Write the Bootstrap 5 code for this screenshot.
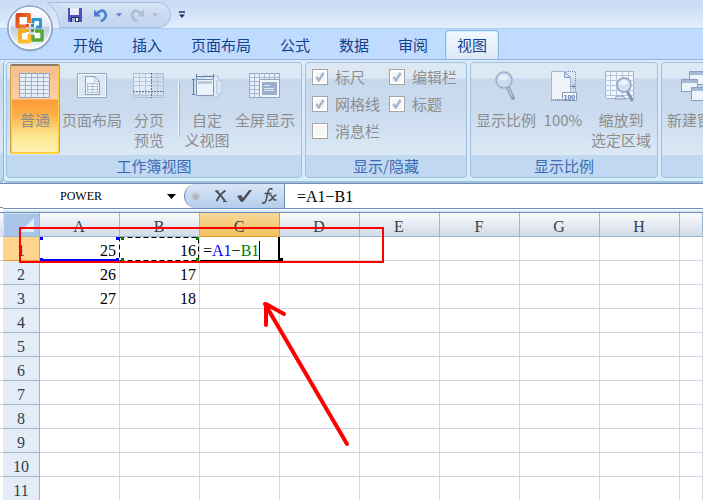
<!DOCTYPE html>
<html lang="zh-CN">
<head>
<meta charset="utf-8">
<meta name="viewport" content="width=device-width, initial-scale=1">
<title>工作表</title>
<link href="https://cdn.jsdelivr.net/npm/bootstrap@5.3.0/dist/css/bootstrap.min.css" rel="stylesheet">
<style>
body{font-family:"Noto Sans CJK SC","Liberation Sans",sans-serif;font-size:15px;line-height:20px;background:#fff;color:#000;height:100vh;overflow:hidden}
svg{display:block;flex:none}
.titlebar{height:28px;background:linear-gradient(#cadcf6,#cfe0f7 40%,#e4effd)}
.office-btn{left:6px;top:4px;z-index:3;border:0;background:none;padding:0}
.quick-bar{margin-left:47px;padding-top:2px}
.quick-items{height:26px;border:1px solid #a5bfe2;border-left:0;border-radius:0 13px 13px 0;background:linear-gradient(#d9e6f8,#c8d9f0 50%,#c3d6f0);padding:0 12px 0 7px}
.plain-btn{border:0;background:none;padding:0;display:flex;align-items:center;justify-content:center}
.tabs-row{height:32px;background:#bfdbff;border-top:1px solid #a9cff5;border-bottom:1px solid #8db2e3;padding-left:59px}
.tabs-row .nav-link{color:#15428b;padding:5px 14px 0;height:29px;line-height:20px;border:0;margin-right:1px;border-radius:0}
.tabs-row .nav-link.active{background:linear-gradient(#f2f8ff,#dde8f5);border:1px solid #8db2e3;border-bottom:0;border-radius:4px 4px 0 0;padding:4px 11px 0;margin:0 2px;box-shadow:inset 1px 1px #c4f0ff,inset -1px 0 #c4f0ff}
.edge{width:3px;flex:none}
.edge-ribbon{height:123px;background:linear-gradient(#dce8f5,#c8d8ed 20%,#dbe8f4 75%,#c0d8f1 76%,#c0d8f1 95%,#a8bfdc)}
.edge-bar{height:30px;border-top:1px solid #6b90bd;background:linear-gradient(#fff 0 23px,#6b90bd 23px 24px,#fff 24px 28px,#6b90bd 28px)}
.edge-grid{background:linear-gradient(#f9fbfc,#d3dbe8) 0 0/3px 24px no-repeat,repeating-linear-gradient(#fff 0 23px,#d0d7e5 23px 24px)}
.ribbon{height:123px;border-left:1px solid #8db2e3;border-bottom:2px solid #aabed9;border-radius:4px 0 0 4px;background:#dbeafa;padding:2px 0 2px 2px;gap:3px;box-shadow:inset 0 -2px #cdf2ff,inset 1px 0 #cdf2ff}
.ribbon-group{height:116px;border:1px solid #a3bfda;border-radius:4px;flex:none;background:linear-gradient(#dde8f5 0 15px,#c7d8ed 16px,#cbdbef 50px,#dbe9f5 92px,#c0d8f1 92px)}
.ribbon-group.last-group{flex:1 0 180px}
.group-body{height:92px;padding:1px 3px}
.group-title{height:22px;line-height:22px;color:#3e6ab3;text-align:center}
.tool-btn{height:90px;border:0;background:none;padding:6px 0 0;color:#8d8d8d;display:flex;flex-direction:column;align-items:center;gap:8px;line-height:20px;white-space:nowrap}
.tool-btn.narrow{width:50px}.tool-btn.mid{width:64px}.tool-btn.wide{width:66px}
.tool-btn.selected{border:1px solid #8e7c5c;border-top-width:2px;border-right-color:#c9a04b;border-left-color:#c9a04b;border-bottom-color:#ffd23c;padding-top:4px;border-radius:2px;box-shadow:inset 1px -1px #ffd045,inset -1px 0 #ffd045;background:linear-gradient(#f5bd8c,#fcd0a3 38%,#fb9a39 39%,#fcae47 55%,#fde58f 80%,#fdf3b4)}
.rule{width:2px;height:55px;margin:18px 2px 0 4px;background:#f6faff;border-right:1px solid #9ab5da}
.checks{padding:0 5px 0 6px;display:grid;grid-template-columns:77px 72px;grid-auto-rows:27px;align-content:start}
.checks label{color:#8d8d8d;display:flex;align-items:center;gap:7px;white-space:nowrap}
.checks .form-check-input{width:16px;height:16px;margin:0;border:1px solid #a6a6a6;border-radius:0;background-color:#f6f6f6;box-shadow:inset 0 0 0 2px #fff;opacity:1;flex:none}
.checks .form-check-input:checked{background-color:#f3f5f8;background-size:14px 14px;background-image:url("data:image/svg+xml,%3Csvg xmlns='http://www.w3.org/2000/svg' viewBox='0 0 14 14'%3E%3Cpath d='M3.5 7l2.3 3.6L10.5 3' fill='none' stroke='%23a5b5cc' stroke-width='2.4'/%3E%3C/svg%3E")}
.checks .form-check-input:disabled~span{opacity:1}
.formula-bar{height:26px;border-top:1px solid #6b90bd;border-bottom:1px solid #6b90bd;font-family:"Liberation Serif",serif}
.name-box{width:181px}
.name-box input{width:156px;border:0;padding:0;text-align:center;font-size:12px;background:none;outline:0}
.fx-tools{width:101px;background:linear-gradient(#d9e6f7,#b4cdec);border:1px solid #6b90bd;border-width:0 1px;border-radius:13px 0 0 13px;padding-left:5px}
.dot{width:10px;height:10px;border-radius:50%;background:radial-gradient(circle at 60% 60%,#a3a9b4,#e9eef6);margin-right:14px}
.formula-input{border:0;outline:0;padding:2px 12px 0;font-size:16px;color:#000}
.gutter{height:4px;border-bottom:1px solid #6b90bd;background:linear-gradient(#fff 0 1px,#dbe8f8 1px)}
.sheet{table-layout:fixed;width:100%;border-collapse:separate;border-spacing:0;font-family:"Liberation Serif",serif;font-size:16px;line-height:19px}
.sheet col.head-col{width:37px}.sheet col.data-col{width:80px}
.sheet td,.sheet th{height:24px;padding:4px 3px 0 2px;border-right:1px solid #d0d7e5;border-bottom:1px solid #d0d7e5;font-weight:400;white-space:nowrap;overflow:hidden}
.sheet td{text-align:right}
.sheet thead th{text-align:center;color:#333f4a;background:linear-gradient(#f9fbfc,#d3dbe8);border-color:#9eb6ce}
.sheet thead th.hot{background:linear-gradient(#f8d798,#f1c15f);border-color:#f29536}
.sheet tbody th{text-align:center;color:#333f4a;background:#e4ecf7;border-color:#9eb6ce;padding:4px 0 0}
.sheet tbody th.hot{background:#ffd58d;border-color:#f29536}
.sheet thead th.corner{background:#a9c4e9;padding:0;box-shadow:inset 1px 1px #d4e3f5}
.sheet td.edit-cell{text-align:left;border-right:2px solid #000;padding-left:3px;border-bottom-color:#000}
.ref-a{color:#00f}.ref-b{color:#008000}
.caret{display:inline-block;width:1px;height:19px;background:#000;vertical-align:top}
.marks{left:0;top:0;z-index:4;pointer-events:none}
</style>
<script src="https://cdn.jsdelivr.net/npm/bootstrap@5.3.0/dist/js/bootstrap.bundle.min.js"></script>
</head>
<body class="d-flex flex-column">
<header class="position-relative">
  <div class="titlebar d-flex">
    <button class="office-btn position-absolute" aria-label="Office">
      <svg width="48" height="50" viewBox="0 0 48 50">
        <defs>
          <linearGradient id="orb" x2="0" y2="1"><stop offset="0" stop-color="#fff"/><stop offset=".45" stop-color="#e3e9f3"/><stop offset=".5" stop-color="#c0cde1"/><stop offset=".8" stop-color="#e2eaf5"/><stop offset="1" stop-color="#fff"/></linearGradient>
          <linearGradient id="or" x2="1" y2="1"><stop stop-color="#d9451b"/><stop offset="1" stop-color="#f2892e"/></linearGradient>
          <linearGradient id="ye" x2="1" y2="1"><stop stop-color="#f6a81b"/><stop offset="1" stop-color="#fbc832"/></linearGradient>
        </defs>
        <circle cx="24" cy="24.500" r="23" fill="#7188ad" opacity=".5"/>
        <circle cx="24" cy="24" r="22" fill="url(#orb)" stroke="#8fa3c2" stroke-width="1.500"/>
        <circle cx="24" cy="24" r="20.500" fill="none" stroke="#fff" stroke-width="1.500" opacity=".8"/>
        <path d="M13 12h9v9h-9zM14 27h9v9h-9zM28 27h8v8h-8zM27 17h8v6h-8z" fill="#fff"/>
        <g fill="none" stroke-linejoin="round">
          <path d="M20 22.500h-8.500V11h11.500v8" stroke="url(#or)" stroke-width="4"/>
          <path d="M27 19.500v-4h7.500v7.500h-4.500" stroke="#2e95cf" stroke-width="3"/>
          <path d="M20 27h-6v10.500h9.500v-7.500" stroke="url(#ye)" stroke-width="4"/>
          <path d="M29 27h7v9h-9v-5" stroke="#59a637" stroke-width="3.400"/>
        </g>
        <path d="M20 20h3v3h-3z" fill="#e0512a"/><path d="M25 20h3v3h-3z" fill="#2687c2"/><path d="M20 25h3v3h-3z" fill="#efab22"/><path d="M25 25h3v3h-3z" fill="#469a39"/>
      </svg>
    </button>
    <div class="quick-bar d-flex">
      <svg width="14" height="26" viewBox="0 0 14 26"><path d="M0 .5h14v25h-1Q12 8 0 .5z" fill="#cfdef3"/><path d="M14 .5H0Q12 7 13 25.500h1" fill="none" stroke="#a5bfe2"/></svg>
      <div class="quick-items d-flex align-items-center">
        <button class="plain-btn" aria-label="保存"><svg width="14" height="14" viewBox="0 0 14 14"><path d="M0 0h14v14H1l-1-1z" fill="#5250bd"/><path d="M2 0h9v7H2z" fill="#e9eefb"/><path d="M3 9h8v5H3z" fill="#282f68"/><path d="M8 10h2v3H8z" fill="#fff"/><path d="M4 10h3v4H4z" fill="#9db2da"/></svg></button>
        <button class="plain-btn ms-2 ps-1" aria-label="撤消"><svg width="14" height="15" viewBox="0 0 14 15"><path d="M2 6.500Q8 0 11 4.500T7 13.500" fill="none" stroke="#4c7fd0" stroke-width="2.600"/><path d="M0 1.500v7h7z" fill="#4c7fd0"/></svg></button>
        <button class="plain-btn ms-2" aria-label="撤消列表"><svg width="6" height="6" viewBox="0 0 7 6"><path d="M0 1h7L3.500 5z" fill="#5f82bb"/></svg></button>
        <button class="plain-btn ms-2" aria-label="恢复"><svg width="14" height="15" viewBox="0 0 14 15"><path d="M12 6.500Q6 0 3 4.500T7 13.500" fill="none" stroke="#adbdd5" stroke-width="2.600"/><path d="M14 1.500v7H7z" fill="#adbdd5"/></svg></button>
        <button class="plain-btn ms-2" aria-label="恢复列表"><svg width="6" height="6" viewBox="0 0 7 6"><path d="M0 1h7L3.500 5z" fill="#b5b7b9"/></svg></button>
      </div>
      <button class="plain-btn ms-2" aria-label="自定义快速访问工具栏"><svg width="6" height="8" viewBox="0 0 7 9"><path d="M0 0h7v2H0zM0 4h7L3.500 8z" fill="#17356f"/></svg></button>
    </div>
  </div>
  <nav class="tabs-row nav flex-nowrap align-items-end" aria-label="功能区">
    <a class="nav-link" href="#">开始</a><a class="nav-link" href="#">插入</a><a class="nav-link" href="#">页面布局</a><a class="nav-link" href="#">公式</a><a class="nav-link" href="#">数据</a><a class="nav-link" href="#">审阅</a><a class="nav-link active" href="#" aria-current="page">视图</a>
  </nav>
</header>

<main class="d-flex flex-grow-1 overflow-hidden">
  <div class="edge d-flex flex-column"><div class="edge-ribbon"></div><div class="edge-bar"></div><div class="edge-grid flex-grow-1"></div></div>
  <div class="flex-grow-1 overflow-hidden">
    <section class="ribbon d-flex overflow-hidden">
      <div class="ribbon-group">
        <div class="group-body d-flex">
          <button class="tool-btn narrow selected"><svg width="32" height="32" viewBox="0 0 32 32"><path d="M.5 3.500h30v24H.5z" fill="#e9eff8" stroke="#8ba0c0"/><path d="M0 7.500h31M0 11.500h31M0 15.500h31M0 19.500h31M0 23.500h31M6.500 3v25M12.500 3v25M18.500 3v25M24.500 3v25" stroke="#a2b3cd" fill="none"/></svg><span>普通</span></button>
          <button class="tool-btn mid"><svg width="32" height="32" viewBox="0 0 32 32"><path d="M1.500 3.500h29v24h-29z" fill="#dce7f4" stroke="#91a5c3"/><path d="M2.500 4.500h27v22h-27z" fill="none" stroke="#f5f9fd"/><path d="M9.500 6.500h9l5 5v13h-14z" fill="#eff4fa" stroke="#8aa0c0"/><path d="M18.500 6.500v5h5M11 13.500h10.500M11 16.500h10.500M11 19.500h10.500M11 22.500h10.500M11.500 13v10M16.500 13v10M21.500 13v10" fill="none" stroke="#b3c2d9"/></svg><span>页面布局</span></button>
          <button class="tool-btn narrow"><svg width="32" height="32" viewBox="0 0 32 32"><path d="M.5 3.500h30v24H.5z" fill="#e4edf7" stroke="#a9bad2"/><path d="M19 28h12V3H19zM0 22h19v6H0z" fill="#b4c6df" opacity=".4"/><path d="M0 7.500h31M0 11.500h31M0 15.500h31M0 25.500h31M6.500 3v25M12.500 3v25M24.500 3v25" stroke="#b9c7dc" fill="none"/><path d="M18.500 3v25M0 21.500h31" stroke="#5d7196" stroke-dasharray="2 1"/></svg><span>分页<br>预览</span></button>
          <div class="rule"></div>
          <button class="tool-btn narrow"><svg width="32" height="32" viewBox="0 0 32 32"><path d="M12 6h15v21H12z" fill="#e3ebf6" stroke="#b4c3da"/><path d="M25.500 10.500h5v13h-5z" fill="#d9e5f4" stroke="#c1cee1"/><path d="M5.500 9.500h17v16h-17z" fill="#edf3fa" stroke="#8197bb"/><path d="M7 11h14v3H7z" fill="#bccbe0"/><path d="M5 6.500h18M5.500 4v5M22.500 4v5M2.500 9v16M1 9.500h3M1 24.500h3" stroke="#637da8" fill="none"/></svg><span>自定<br>义视图</span></button>
          <button class="tool-btn wide"><svg width="32" height="32" viewBox="0 0 32 32"><path d="M.5 3.500h30v24H.5z" fill="#e8eff8" stroke="#94a8c6"/><path d="M0 7.500h31M0 11.500h10M0 15.500h10M0 19.500h10M0 23.500h10M5.500 3v25M10.500 3v25M15.500 3v6M20.500 3v6M25.500 3v6" fill="none" stroke="#a9b9d2"/><path d="M10.500 9.500h20v18h-20z" fill="#f2f6fb" stroke="#8fa4c2"/><path d="M13 12h15v13H13z" fill="#9bafcc"/><path d="M15 15.500h6M15 18.500h10M15 20.500h10" stroke="#e1eaf6"/></svg><span>全屏显示</span></button>
        </div>
        <div class="group-title">工作簿视图</div>
      </div>
      <div class="ribbon-group">
        <div class="group-body checks">
          <label><input class="form-check-input" type="checkbox" checked disabled><span>标尺</span></label>
          <label><input class="form-check-input" type="checkbox" checked disabled><span>编辑栏</span></label>
          <label><input class="form-check-input" type="checkbox" checked disabled><span>网格线</span></label>
          <label><input class="form-check-input" type="checkbox" checked disabled><span>标题</span></label>
          <label><input class="form-check-input" type="checkbox" disabled><span>消息栏</span></label>
        </div>
        <div class="group-title">显示/隐藏</div>
      </div>
      <div class="ribbon-group">
        <div class="group-body d-flex">
          <button class="tool-btn mid"><svg width="32" height="32" viewBox="0 0 32 32"><path d="M18 18l5 10" stroke="#8fa2c0" stroke-width="4" stroke-linecap="round"/><path d="M18 18l4.500 9" stroke="#b9c7dc" stroke-width="1.500"/><circle cx="14" cy="10" r="8" fill="#cbdbef" stroke="#9badc9" stroke-width="1.500"/><path d="M8 9q5-8 11-2-3 5-11 2z" fill="#e6effa"/></svg><span>显示比例</span></button>
          <button class="tool-btn narrow"><svg width="32" height="32" viewBox="0 0 32 32"><path d="M4.500 1.500h13l6 6v22h-19z" fill="#f0f5fb" stroke="#a5b6cf"/><path d="M17.500 1.500v6h6z" fill="#d3dfee" stroke="#879cbc"/><path d="M19 1.500h9.500V30M4 30.500h14" fill="none" stroke="#7489ab" stroke-dasharray="1 1"/><path d="M23 16.500h5M26 14.500l2 2-2 2" fill="none" stroke="#7288ac"/><path d="M15.500 22.500h14v8h-14z" fill="#f7faff" stroke="#8699b7"/><text x="16.500" y="29.500" font-family="Liberation Sans,sans-serif" font-weight="700" font-size="7" fill="#5f7292">100</text></svg><span>100%</span></button>
          <button class="tool-btn wide"><svg width="32" height="32" viewBox="0 0 32 32"><path d="M.5 1.500h28v27H2.500l-2-2z" fill="#f1f6fb" stroke="#9fb1cc"/><path d="M0 5.500h29M0 10.500h29M0 15.500h29M0 20.500h29M0 25.500h29M5.500 1v25M11.500 1v25M17.500 1v25M23.500 1v25" fill="none" stroke="#b9c7dc"/><path d="M10 29l1.500-3h7l1.500 3z" fill="#dde7f4" stroke="#7f94b6"/><path d="M22 21l5 9" stroke="#8194b5" stroke-width="3" stroke-linecap="round"/><circle cx="19" cy="15" r="7" fill="#d2e0f2" stroke="#8fa3c2" stroke-width="1.500"/><path d="M14 14q4-7 9-2-2 5-9 2z" fill="#eff5fc"/></svg><span>缩放到<br>选定区域</span></button>
        </div>
        <div class="group-title">显示比例</div>
      </div>
      <div class="ribbon-group last-group">
        <div class="group-body d-flex">
          <button class="tool-btn mid"><svg width="32" height="32" viewBox="0 0 32 32"><g fill="#edf3fa" stroke="#8ba0c0"><path d="M8.500 1.500h18v13h-18z"/><path d="M.500 9.500h16v12H.500z"/><path d="M10.500 17.500h18v13h-18z"/></g><path d="M9 2h17v3H9zM1 10h15v3H1zM11 18h17v3H11z" fill="#a7b9d4"/></svg><span>新建窗口</span></button>
        </div>
        <div class="group-title"></div>
      </div>
    </section>

    <div class="formula-bar d-flex align-items-stretch">
      <div class="name-box d-flex align-items-center justify-content-between flex-shrink-0">
        <input aria-label="名称框" value="POWER">
        <button class="plain-btn pe-2" aria-label="名称列表"><svg width="9" height="5" viewBox="0 0 9 5"><path d="M0 0h9L4.500 5z"/></svg></button>
      </div>
      <div class="fx-tools d-flex align-items-center flex-shrink-0">
        <span class="dot"></span>
        <button class="plain-btn" aria-label="取消"><svg width="14" height="14" viewBox="0 0 14 14"><path d="M2 2q4 3 9 10M11.500 1.500Q6 5 2.500 12" fill="none" stroke="#4b5058" stroke-width="2"/><path d="M1 2h4M9 12.500h4" stroke="#4b5058"/></svg></button>
        <button class="plain-btn ms-2" aria-label="输入"><svg width="17" height="14" viewBox="0 0 17 14"><path d="M1 7l4-1 2 3 6-8 3 0-9 12-2 0z" fill="#4b5058"/></svg></button>
        <button class="plain-btn ms-2" aria-label="插入函数"><svg width="17" height="18" viewBox="0 0 17 18"><path d="M11.500 2.500Q8 0 7 5L5 13.500Q4 17 1 15.500M3.500 6.500h7" fill="none" stroke="#4b5058" stroke-width="1.600"/><path d="M8.500 8.500q2-1 3 2t4 2.500M15.500 8q-2 0-4 3t-4 2.500" fill="none" stroke="#4b5058" stroke-width="1.500"/></svg></button>
      </div>
      <input class="formula-input flex-grow-1" aria-label="编辑栏" value="=A1−B1">
    </div>
    <div class="gutter"></div>

    <div class="position-relative">
      <table class="sheet">
        <colgroup><col class="head-col"><col class="data-col" span="8"><col></colgroup>
        <thead><tr><th class="corner"><svg width="36" height="23" viewBox="0 0 36 23"><path d="M31 5v14H17z" fill="#e2ebf7"/></svg></th><th>A</th><th>B</th><th class="hot">C</th><th>D</th><th>E</th><th>F</th><th>G</th><th>H</th><th></th></tr></thead>
        <tbody>
          <tr><th class="hot">1</th><td>25</td><td>16</td><td class="edit-cell">=<span class="ref-a">A1</span>−<span class="ref-b">B1</span><span class="caret"></span></td><td></td><td></td><td></td><td></td><td></td><td></td></tr>
          <tr><th>2</th><td>26</td><td>17</td><td></td><td></td><td></td><td></td><td></td><td></td><td></td></tr>
          <tr><th>3</th><td>27</td><td>18</td><td></td><td></td><td></td><td></td><td></td><td></td><td></td></tr>
          <tr><th>4</th><td></td><td></td><td></td><td></td><td></td><td></td><td></td><td></td><td></td></tr>
          <tr><th>5</th><td></td><td></td><td></td><td></td><td></td><td></td><td></td><td></td><td></td></tr>
          <tr><th>6</th><td></td><td></td><td></td><td></td><td></td><td></td><td></td><td></td><td></td></tr>
          <tr><th>7</th><td></td><td></td><td></td><td></td><td></td><td></td><td></td><td></td><td></td></tr>
          <tr><th>8</th><td></td><td></td><td></td><td></td><td></td><td></td><td></td><td></td><td></td></tr>
          <tr><th>9</th><td></td><td></td><td></td><td></td><td></td><td></td><td></td><td></td><td></td></tr>
          <tr><th>10</th><td></td><td></td><td></td><td></td><td></td><td></td><td></td><td></td><td></td></tr>
          <tr><th>11</th><td></td><td></td><td></td><td></td><td></td><td></td><td></td><td></td><td></td></tr>
        </tbody>
      </table>
      <!-- reference borders, highlight frame and arrow over the cells -->
      <svg class="marks position-absolute" width="400" height="250" viewBox="0 0 400 250">
        <path d="M37 47h79" stroke="#00f" stroke-width="2"/>
        <path d="M37 24h3v3h-3zM113 24h3v3h-3zM37 45h3v3h-3zM113 45h3v3h-3z" fill="#00f"/>
        <path d="M116.500 24.500h79v23h-79z" fill="none" stroke="#fff"/>
        <path d="M116.500 24.500h79v23h-79z" fill="none" stroke="#000" stroke-dasharray="5 3"/>
        <path d="M118 24h3v3h-3zM193 24h3v3h-3zM118 45h3v3h-3zM193 45h3v3h-3z" fill="#008000"/>
        <path d="M277 45h3v3h-3z"/>
        <path d="M17 15h363v34H17z" fill="none" stroke="red" stroke-width="2"/>
        <path d="M344 231L262 91M263 112V91l18 10" fill="none" stroke="red" stroke-width="4" stroke-linecap="round" stroke-linejoin="round"/>
      </svg>
    </div>
  </div>
</main>
</body>
</html>
